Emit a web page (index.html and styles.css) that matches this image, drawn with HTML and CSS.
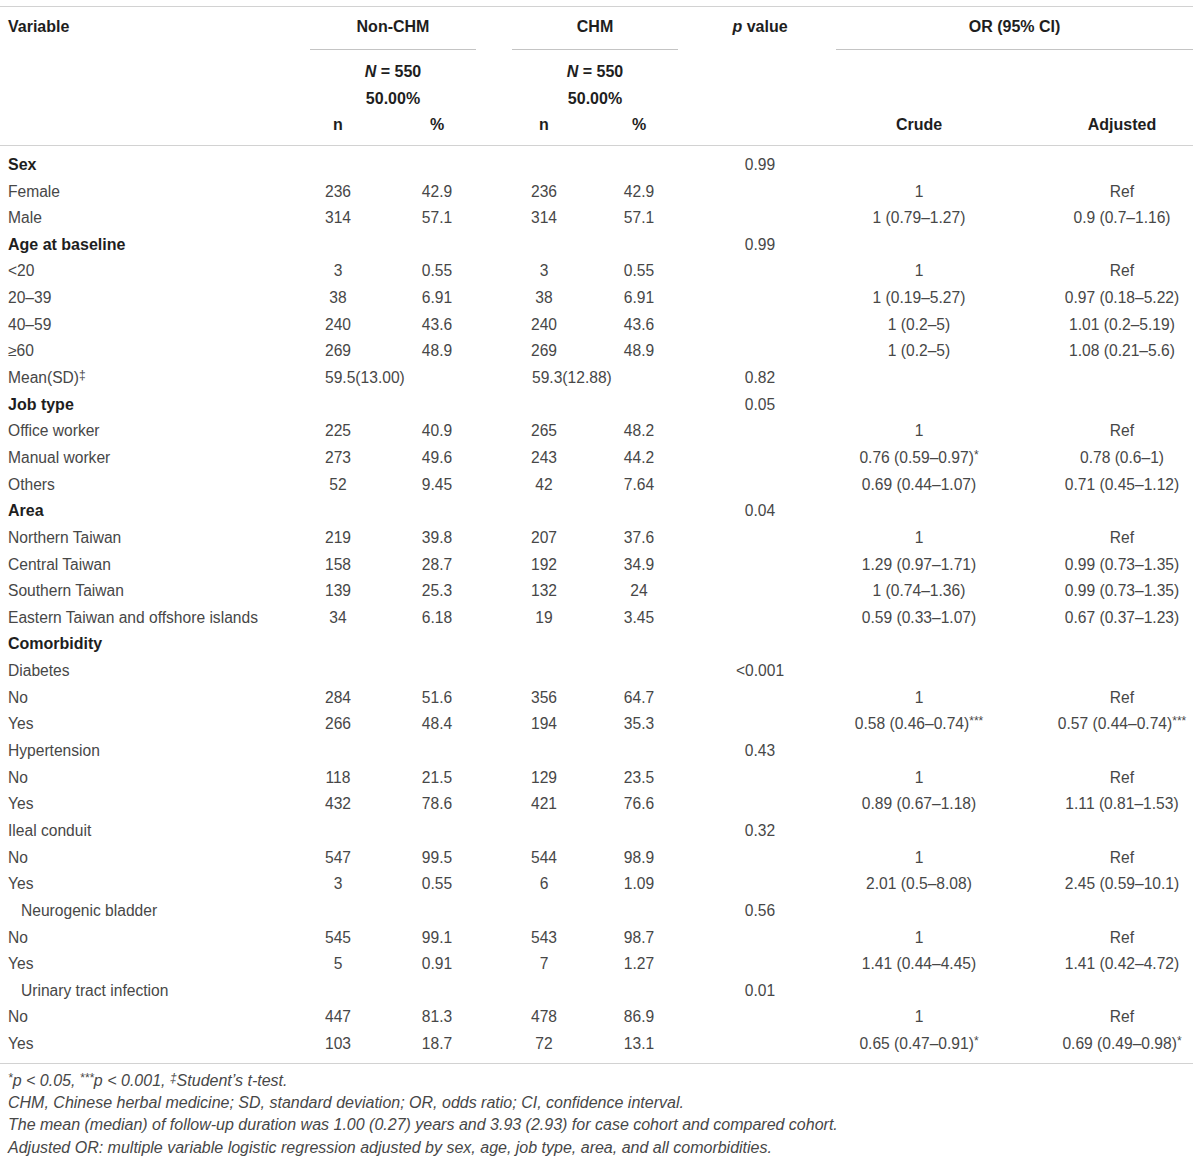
FILE: index.html
```html
<!DOCTYPE html>
<html lang="en">
<head>
  <meta charset="UTF-8">
  <meta name="viewport" content="width=device-width, initial-scale=1.0">
  <title>Table 1</title>
  <link rel="stylesheet" href="styles.css">
</head>
<body>
  <table class="data-table">
    <colgroup>
      <col class="c-var"><col class="c-n1"><col class="c-p1"><col class="c-n2"><col class="c-p2"><col class="c-pv"><col class="c-cr"><col class="c-adj">
    </colgroup>
    <thead>
      <tr class="head-top">
        <th class="left"><div class="hd">Variable</div></th>
        <th colspan="2"><div class="hd group g-non">Non-CHM</div></th>
        <th colspan="2"><div class="hd group g-chm">CHM</div></th>
        <th><div class="hd"><i>p</i> value</div></th>
        <th colspan="2"><div class="hd group g-or">OR (95% CI)</div></th>
      </tr>
      <tr class="head-sub first">
        <th></th>
        <th colspan="2" class="sub-non"><i>N</i> = 550</th>
        <th colspan="2" class="sub-chm"><i>N</i> = 550</th>
        <th></th><th></th><th></th>
      </tr>
      <tr class="head-sub">
        <th></th>
        <th colspan="2" class="sub-non">50.00%</th>
        <th colspan="2" class="sub-chm">50.00%</th>
        <th></th><th></th><th></th>
      </tr>
      <tr class="head-sub last">
        <th></th>
        <th>n</th><th>%</th>
        <th>n</th><th>%</th>
        <th></th>
        <th>Crude</th>
        <th class="adj">Adjusted</th>
      </tr>
    </thead>
    <tbody>
      <tr><td class="left section">Sex</td><td></td><td></td><td></td><td></td><td>0.99</td><td></td><td class="adj"></td></tr>
      <tr><td class="left">Female</td><td>236</td><td>42.9</td><td>236</td><td>42.9</td><td></td><td>1</td><td class="adj">Ref</td></tr>
      <tr><td class="left">Male</td><td>314</td><td>57.1</td><td>314</td><td>57.1</td><td></td><td>1 (0.79–1.27)</td><td class="adj">0.9 (0.7–1.16)</td></tr>
      <tr><td class="left section">Age at baseline</td><td></td><td></td><td></td><td></td><td>0.99</td><td></td><td class="adj"></td></tr>
      <tr><td class="left">&lt;20</td><td>3</td><td>0.55</td><td>3</td><td>0.55</td><td></td><td>1</td><td class="adj">Ref</td></tr>
      <tr><td class="left">20–39</td><td>38</td><td>6.91</td><td>38</td><td>6.91</td><td></td><td>1 (0.19–5.27)</td><td class="adj">0.97 (0.18–5.22)</td></tr>
      <tr><td class="left">40–59</td><td>240</td><td>43.6</td><td>240</td><td>43.6</td><td></td><td>1 (0.2–5)</td><td class="adj">1.01 (0.2–5.19)</td></tr>
      <tr><td class="left">≥60</td><td>269</td><td>48.9</td><td>269</td><td>48.9</td><td></td><td>1 (0.2–5)</td><td class="adj">1.08 (0.21–5.6)</td></tr>
      <tr><td class="left">Mean(SD)<sup>‡</sup></td><td colspan="2" class="mean">59.5(13.00)</td><td colspan="2" class="mean mean-chm">59.3(12.88)</td><td>0.82</td><td></td><td class="adj"></td></tr>
      <tr><td class="left section">Job type</td><td></td><td></td><td></td><td></td><td>0.05</td><td></td><td class="adj"></td></tr>
      <tr><td class="left">Office worker</td><td>225</td><td>40.9</td><td>265</td><td>48.2</td><td></td><td>1</td><td class="adj">Ref</td></tr>
      <tr><td class="left">Manual worker</td><td>273</td><td>49.6</td><td>243</td><td>44.2</td><td></td><td>0.76 (0.59–0.97)<sup>*</sup></td><td class="adj">0.78 (0.6–1)</td></tr>
      <tr><td class="left">Others</td><td>52</td><td>9.45</td><td>42</td><td>7.64</td><td></td><td>0.69 (0.44–1.07)</td><td class="adj">0.71 (0.45–1.12)</td></tr>
      <tr><td class="left section">Area</td><td></td><td></td><td></td><td></td><td>0.04</td><td></td><td class="adj"></td></tr>
      <tr><td class="left">Northern Taiwan</td><td>219</td><td>39.8</td><td>207</td><td>37.6</td><td></td><td>1</td><td class="adj">Ref</td></tr>
      <tr><td class="left">Central Taiwan</td><td>158</td><td>28.7</td><td>192</td><td>34.9</td><td></td><td>1.29 (0.97–1.71)</td><td class="adj">0.99 (0.73–1.35)</td></tr>
      <tr><td class="left">Southern Taiwan</td><td>139</td><td>25.3</td><td>132</td><td>24</td><td></td><td>1 (0.74–1.36)</td><td class="adj">0.99 (0.73–1.35)</td></tr>
      <tr><td class="left">Eastern Taiwan and offshore islands</td><td>34</td><td>6.18</td><td>19</td><td>3.45</td><td></td><td>0.59 (0.33–1.07)</td><td class="adj">0.67 (0.37–1.23)</td></tr>
      <tr><td class="left section">Comorbidity</td><td></td><td></td><td></td><td></td><td></td><td></td><td class="adj"></td></tr>
      <tr><td class="left">Diabetes</td><td></td><td></td><td></td><td></td><td>&lt;0.001</td><td></td><td class="adj"></td></tr>
      <tr><td class="left">No</td><td>284</td><td>51.6</td><td>356</td><td>64.7</td><td></td><td>1</td><td class="adj">Ref</td></tr>
      <tr><td class="left">Yes</td><td>266</td><td>48.4</td><td>194</td><td>35.3</td><td></td><td>0.58 (0.46–0.74)<sup>***</sup></td><td class="adj">0.57 (0.44–0.74)<sup>***</sup></td></tr>
      <tr><td class="left">Hypertension</td><td></td><td></td><td></td><td></td><td>0.43</td><td></td><td class="adj"></td></tr>
      <tr><td class="left">No</td><td>118</td><td>21.5</td><td>129</td><td>23.5</td><td></td><td>1</td><td class="adj">Ref</td></tr>
      <tr><td class="left">Yes</td><td>432</td><td>78.6</td><td>421</td><td>76.6</td><td></td><td>0.89 (0.67–1.18)</td><td class="adj">1.11 (0.81–1.53)</td></tr>
      <tr><td class="left">Ileal conduit</td><td></td><td></td><td></td><td></td><td>0.32</td><td></td><td class="adj"></td></tr>
      <tr><td class="left">No</td><td>547</td><td>99.5</td><td>544</td><td>98.9</td><td></td><td>1</td><td class="adj">Ref</td></tr>
      <tr><td class="left">Yes</td><td>3</td><td>0.55</td><td>6</td><td>1.09</td><td></td><td>2.01 (0.5–8.08)</td><td class="adj">2.45 (0.59–10.1)</td></tr>
      <tr><td class="left indent">Neurogenic bladder</td><td></td><td></td><td></td><td></td><td>0.56</td><td></td><td class="adj"></td></tr>
      <tr><td class="left">No</td><td>545</td><td>99.1</td><td>543</td><td>98.7</td><td></td><td>1</td><td class="adj">Ref</td></tr>
      <tr><td class="left">Yes</td><td>5</td><td>0.91</td><td>7</td><td>1.27</td><td></td><td>1.41 (0.44–4.45)</td><td class="adj">1.41 (0.42–4.72)</td></tr>
      <tr><td class="left indent">Urinary tract infection</td><td></td><td></td><td></td><td></td><td>0.01</td><td></td><td class="adj"></td></tr>
      <tr><td class="left">No</td><td>447</td><td>81.3</td><td>478</td><td>86.9</td><td></td><td>1</td><td class="adj">Ref</td></tr>
      <tr><td class="left">Yes</td><td>103</td><td>18.7</td><td>72</td><td>13.1</td><td></td><td>0.65 (0.47–0.91)<sup>*</sup></td><td class="adj">0.69 (0.49–0.98)<sup>*</sup></td></tr>
    </tbody>
  </table>

  <div class="notes">
    <p><sup>*</sup>p &lt; 0.05, <sup>***</sup>p &lt; 0.001, <sup>‡</sup>Student’s t-test.</p>
    <p>CHM, Chinese herbal medicine; SD, standard deviation; OR, odds ratio; CI, confidence interval.</p>
    <p>The mean (median) of follow-up duration was 1.00 (0.27) years and 3.93 (2.93) for case cohort and compared cohort.</p>
    <p>Adjusted OR: multiple variable logistic regression adjusted by sex, age, job type, area, and all comorbidities.</p>
  </div>
</body>
</html>
```

FILE: styles.css
```css
body { margin: 0; padding: 6px 0 0; background: #fff; font-family: "Liberation Sans", Arial, sans-serif; color: #474747; }

.data-table { width: 1193px; border-collapse: collapse; table-layout: fixed; border-top: 1px solid #d2d2d2; }
.c-var { width: 290px; }
.c-n1 { width: 96px; }
.c-p1 { width: 102px; }
.c-n2 { width: 112px; }
.c-p2 { width: 78px; }
.c-pv { width: 164px; }
.c-cr { width: 154px; }
.c-adj { width: 197px; }

.data-table th { font-size: 16px; font-weight: bold; color: #1e1e1e; padding: 0; text-align: center; white-space: nowrap; }
.data-table td { font-size: 15.6px; line-height: 26.64px; padding: 0; text-align: center; white-space: nowrap; }
.data-table .left { text-align: left; padding-left: 8px; }
.data-table .adj { padding-left: 55px; }

.hd { padding: 9px 0 11px; line-height: 22px; border-bottom: 1px solid transparent; }
.group { border-bottom-color: #c4c4c4; }
.g-non { margin: 0 12px 0 20px; }
.g-chm { margin: 0 0 0 24px; }
.g-or { margin: 0 0 0 -6px; }

.head-sub th { line-height: 26.64px; }
.head-sub.first th { padding-top: 9px; }
.head-sub.last th { padding-bottom: 6px; }
.head-sub.last { border-bottom: 1px solid #d2d2d2; }
.data-table .head-sub.last .adj { padding-left: 55px; }
.sub-non { padding-left: 20px !important; padding-right: 12px !important; }
.sub-chm { padding-left: 24px !important; }

.data-table td.section { font-weight: bold; font-size: 16px; color: #1e1e1e; }
.data-table td.indent { padding-left: 21px; }
.data-table td.mean { text-align: left; padding-left: 35px; }
.data-table td.mean-chm { padding-left: 44px; }

tbody tr:first-child td { padding-top: 6px; }
tbody tr:last-child td { padding-bottom: 5px; }
tbody { border-bottom: 1px solid #d2d2d2; }

sup { font-size: 12px; line-height: 0; vertical-align: 4px; }

.notes { padding: 6px 0 0 8px; font-style: italic; font-size: 16px; color: #474747; }
.notes p { margin: 0; line-height: 22.3px; }
```
